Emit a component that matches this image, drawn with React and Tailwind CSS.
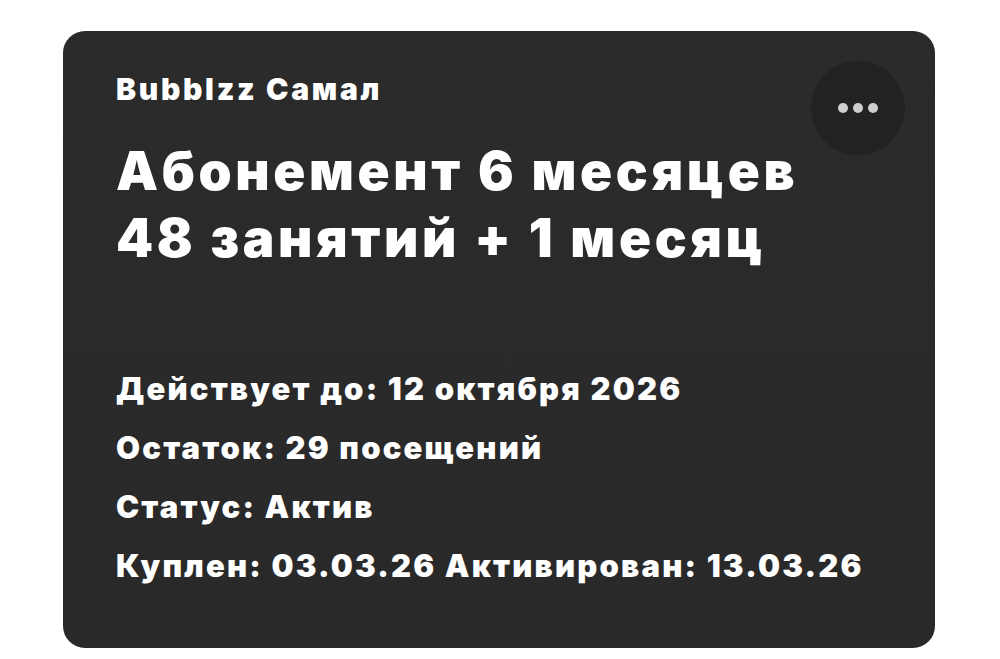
import React from "react";

const details = [
  "Действует до: 12 октября 2026",
  "Остаток: 29 посещений",
  "Статус: Актив",
  "Куплен: 03.03.26 Активирован: 13.03.26",
];

const App = () => {
  return (
    <div
      className="min-h-[659px] w-full bg-white pt-[31px] pl-[63px]"
      style={{ fontFamily: "Inter, 'Noto Sans', sans-serif" }}
    >
      <div className="relative flex h-[617px] w-[872px] flex-col rounded-[22px] bg-gradient-to-b from-[#2b2b2b] to-[#292929] pl-[53px] pt-[40px] text-white">
        {/* кнопка меню */}
        <button className="absolute right-[30px] top-[30px] flex h-[94px] w-[94px] items-center justify-center gap-[5px] rounded-full bg-[#222222]">
          <span className="h-[10px] w-[10px] rounded-full bg-[#cfcfcf]" />
          <span className="h-[10px] w-[10px] rounded-full bg-[#cfcfcf]" />
          <span className="h-[10px] w-[10px] rounded-full bg-[#cfcfcf]" />
        </button>

        <div className="text-[30px] font-black leading-[36px] tracking-[2.7px]">
          Bubblzz Самал
        </div>

        <div className="mt-[31px] text-[53px] font-black leading-[67px] tracking-[3.6px]">
          <div>Абонемент 6 месяцев</div>
          <div>48 занятий + 1 месяц</div>
        </div>

        <div className="mt-[98px] flex flex-col gap-[21px]">
          {details.map((line) => (
            <div key={line} className="text-[31px] font-black leading-[38px] tracking-[2.2px]">
              {line}
            </div>
          ))}
        </div>
      </div>
    </div>
  );
};

export default App;
